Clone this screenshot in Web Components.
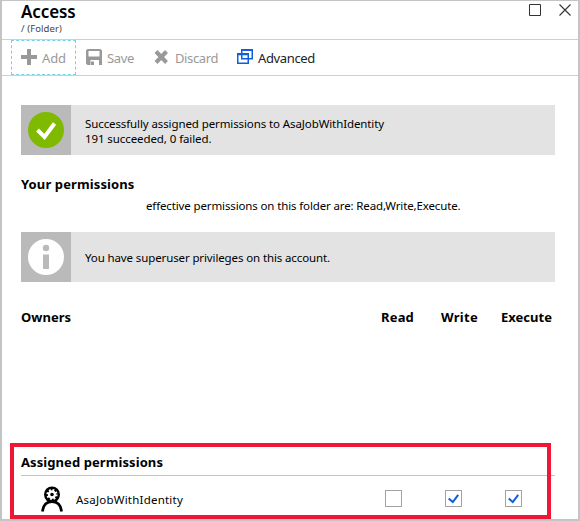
<!DOCTYPE html>
<html lang="en">
<head>
<meta charset="utf-8">
<title>Access</title>
<style>
html,body{margin:0;height:100%;overflow:hidden;background:#fff}
</style>
</head>
<body>
<access-blade></access-blade>
<script>
const define = (name, html, setup) => {
  const tpl = document.createElement('template');
  tpl.innerHTML = html;
  customElements.define(name, class extends HTMLElement {
    constructor() {
      super();
      this.attachShadow({mode: 'open'}).appendChild(tpl.content.cloneNode(true));
    }
    connectedCallback() { if (setup) setup(this); }
  });
};

/* One line of text, tracked so that it spans the width given in "w". */
define('ui-text', `<style>
:host{display:block;white-space:nowrap;width:max-content}
span{display:inline-block}
</style><span><slot></slot></span>`, el => {
  const span = el.shadowRoot.querySelector('span');
  const w = +el.getAttribute('w');
  const natural = span.getBoundingClientRect().width;
  span.style.letterSpacing = ((w - natural) / el.textContent.length) + 'px';
});

define('tool-button', `<style>
:host{display:flex;box-sizing:border-box;height:35px;align-items:flex-start;padding:8px 0 0 10px;color:#999;border:1px solid transparent;border-left:0;font-size:13px;line-height:18px}
:host([focused]){border:1px dashed #6fd3ea;padding-left:9px}
:host([active]){color:#222}
.i{width:16px;height:16px;margin-right:5px;flex:none}
</style><div class="i"><slot name="icon"></slot></div><slot></slot>`);

define('notice-bar', `<style>
:host{display:flex;height:50px;background:#e3e3e3}
.i{width:50px;height:50px;background:#bababa;flex:none}
.t{display:flex;flex-direction:column;justify-content:center;padding:2px 0 0 14px;line-height:15px}
:host([single]) .t{padding-top:0}
</style><div class="i"><slot name="icon"></slot></div><div class="t"><slot></slot></div>`);

define('check-box', `<style>
:host{display:block;box-sizing:border-box;width:17px;height:17px;border:1px solid #a2a2a2;background:#fff}
svg{display:none}
:host([checked]) svg{display:block}
</style><svg width="15" height="15"><path d="M2.7 7.4 6.8 11 12.2 3.9" fill="none" stroke="#1160d8" stroke-width="2"/></svg>`);

define('blade-header', `<style>
:host{display:flex;justify-content:space-between;height:37px;border-bottom:1px solid #cfcfcf;padding:0 6px 0 19px}
.title{font-size:17px;line-height:20px;font-weight:600}
.sub{font-size:9.5px;line-height:13px;color:#444}
svg{display:block}
</style>
<div><ui-text class="title" w="54.5">Access</ui-text><ui-text class="sub" w="41">/ (Folder)</ui-text></div>
<svg width="44" height="20" fill="none" stroke="#333"><path d="M1.5 2.5h11v11h-11z"/><path d="M31.5 2.5l11 11M42.5 2.5l-11 11" stroke-width="1.1"/></svg>`);

define('blade-toolbar', `<style>
:host{display:flex;height:35px;border-bottom:1px solid #cfcfcf;padding-left:9px}
svg{display:block}
tool-button{flex:none}
tool-button:nth-of-type(1){width:65px}
tool-button:nth-of-type(2){width:66px}
tool-button:nth-of-type(3){width:82px;padding-left:12px}
tool-button:nth-of-type(4){width:95px;padding-left:13px}
</style>
<tool-button focused><svg slot="icon" width="16" height="16"><path d="M6 0h4v6h6v4h-6v6h-4v-6h-6v-4h6z" fill="#999"/></svg><ui-text w="24">Add</ui-text></tool-button>
<tool-button><svg slot="icon" width="16" height="16"><path fill="#999" fill-rule="evenodd" d="M1.500 0h13l1.500 1.500v14.500h-3v-5h-8.500v5h-3l-1.500-1.500v-13zM2.500 2v5.500h11v-5.500zM5 12.500h3v3.500h-3z"/></svg><ui-text w="27">Save</ui-text></tool-button>
<tool-button><svg slot="icon" width="16" height="16"><path d="M2 2.500 12.500 13.500M12.500 2.500 2 13.500" stroke="#999" stroke-width="4"/></svg><ui-text w="43">Discard</ui-text></tool-button>
<tool-button active><svg slot="icon" width="16" height="16" fill="none" stroke="#0f5fdc" stroke-width="1.500"><path d="M4.750 1.250h10.500v8.500h-10.500zM.750 5.250h10.500v9h-10.500z"/><path d="M4 1h12M0 5.200h12" stroke-width="2.200"/></svg><ui-text w="57">Advanced</ui-text></tool-button>`);

/* A row with a leading cell and three columns for read, write and execute. */
define('grant-row', `<style>
:host{display:grid;grid-template-columns:var(--lead) 60px 60px 60px;justify-content:start;align-items:center}
</style><slot></slot>`);

/* The frame is laid over the list and its divider. */
define('assigned-list', `<style>
:host{display:block;position:relative;box-sizing:border-box;width:541px;height:76px;padding:9px 0 0 11px}
.frame{position:absolute;inset:0;border:4px solid #ef1735}
.h{font-size:13px;font-weight:700;line-height:20px}
.line{width:534px;height:1px;background:#c5c5c5;margin-top:3px}
.who{display:flex;align-items:center;padding-left:20px}
.who svg{margin-right:13px}
.who ui-text{padding-top:2px}
grant-row{--lead:364px;margin-top:9px;height:27px}
</style>
<ui-text class="h" w="142">Assigned permissions</ui-text>
<div class="line"></div>
<grant-row>
<div class="who"><svg width="22" height="27" fill="none" stroke="#000"><path d="M1.600 26.500C2 20 6 16.500 11 16.500S20 20 20.400 26.500" stroke-width="2.800"/><circle cx="11" cy="9.500" r="8" fill="#000" stroke="none"/><circle cx="11" cy="9.500" r="4.400" stroke="#fff" stroke-width="2.400" stroke-dasharray="1.728"/><circle cx="11" cy="9.500" r="3" stroke="#fff" stroke-width="2.400"/></svg><ui-text w="107">AsaJobWithIdentity</ui-text></div>
<check-box></check-box><check-box checked></check-box><check-box checked></check-box>
</grant-row>
<div class="frame"></div>`);

define('access-blade', `<style>
:host{display:block;box-sizing:border-box;width:580px;height:521px;border:2px solid #c4c4c4;border-top-width:1px;background:#fff;color:#000;font:11.5px "Noto Sans","Open Sans",sans-serif}
main{padding:29px 23px 0 19px}
.h{font-size:13px;font-weight:700;line-height:20px}
.your{margin-top:19px}
.eff{margin:4px 0 0 125px;line-height:15px}
.super{margin-top:19px}
.cols{--lead:360px;margin-top:25px}
assigned-list{margin:116px 0 0 -11px}
blade-header{padding-top:1px}
</style>
<blade-header></blade-header>
<blade-toolbar></blade-toolbar>
<main>
<notice-bar><svg slot="icon" width="50" height="50"><circle cx="25" cy="25" r="18" fill="#7fba00"/><path d="M16.500 25l7 7L33.500 18.500" fill="none" stroke="#fff" stroke-width="4"/></svg><ui-text w="299">Successfully assigned permissions to AsaJobWithIdentity</ui-text><ui-text w="126.500">191 succeeded, 0 failed.</ui-text></notice-bar>
<ui-text class="h your" w="113.500">Your permissions</ui-text>
<ui-text class="eff" w="314.500">effective permissions on this folder are: Read,Write,Execute.</ui-text>
<notice-bar class="super" single><svg slot="icon" width="50" height="50"><circle cx="25" cy="25" r="18" fill="#fff"/><circle cx="25" cy="16" r="3.200" fill="#bababa"/><path d="M22 22.500h6v14.500h-6z" fill="#bababa"/></svg><ui-text w="245">You have superuser privileges on this account.</ui-text></notice-bar>
<grant-row class="cols h"><ui-text w="50">Owners</ui-text><ui-text w="33">Read</ui-text><ui-text w="37">Write</ui-text><ui-text w="51">Execute</ui-text></grant-row>
<assigned-list></assigned-list>
</main>`);
</script>
</body>
</html>
